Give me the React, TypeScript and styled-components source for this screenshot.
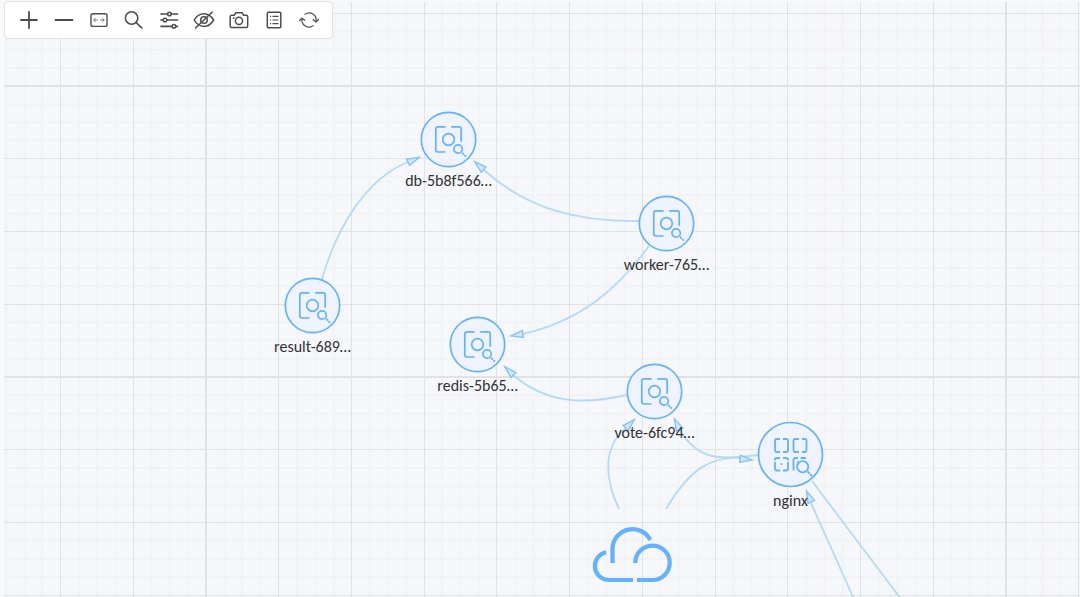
import React from 'react';
import styled, { createGlobalStyle } from 'styled-components';

const GlobalStyle = createGlobalStyle`
  *, *::before, *::after { box-sizing: border-box; }
  body {
    margin: 0;
    background: #f7f9fc;
    font-family: Carlito, Lato, "Liberation Sans", sans-serif;
    color: #333;
  }
`;

const Page = styled.main`
  position: relative;
  display: flex;
  height: 100vh;
  padding: 2px 0 0 4px;
  overflow: hidden;
`;

const Canvas = styled.section`
  position: relative;
  flex: 1;
  overflow: hidden;
  background: #f5f7fb;
`;

const Layer = styled.svg`
  position: absolute;
  inset: 0;
  width: 100%;
  height: 100%;
`;

const Toolbar = styled.div`
  position: absolute;
  top: 1px;
  left: 4px;
  display: flex;
  padding: 0 6px;
  background: #fff;
  border: 1px solid #e2e2e2;
  border-radius: 4px;
`;

const ToolButton = styled.button`
  display: flex;
  align-items: center;
  justify-content: center;
  width: 35px;
  height: 36px;
  padding: 0;
  border: 0;
  background: none;
  cursor: pointer;
`;

const ToolIcon = styled.svg`
  width: 24px;
  height: 24px;
  fill: none;
  stroke: #4d4d4d;
  stroke-width: 1.5;
  stroke-linecap: round;
  stroke-linejoin: round;
`;

const Node = styled.div<{ $x: number; $y: number }>`
  position: absolute;
  left: ${(p) => p.$x}px;
  top: ${(p) => p.$y}px;
  display: flex;
  flex-direction: column;
  align-items: center;
  gap: 3px;
  width: 121px;
  margin-left: -60px;
`;

const NodeIcon = styled.svg<{ $size: number }>`
  width: ${(p) => p.$size}px;
  height: ${(p) => p.$size}px;
  fill: none;
  stroke: #64b1fe;
  stroke-width: 1.7;
`;

const NodeLabel = styled.span`
  font-size: 16px;
  line-height: 20px;
  white-space: nowrap;
`;

/* Grid geometry, in canvas coordinates */
const CELL = 72.73;
const cells = Array.from({ length: 45 }, (_, i) => i);
const columnAt = (i: number) => 56.5 + CELL * i;
const rowAt = (i: number) => 11.2 + CELL * i;

const Grid = () => (
  <Layer aria-hidden="true" stroke="none">
    <g fill="#f2f3f4">
      {[-1, ...cells].flatMap((i) =>
        [1, 2, 3].map((j) => (
          <React.Fragment key={`${i}-${j}`}>
            <rect x={columnAt(i + j / 4) - 0.8} y="0" width="2" height="100%" />
            <rect x="0" y={rowAt(i + j / 4) - 0.8} width="100%" height="2" />
          </React.Fragment>
        )),
      )}
    </g>
    <g fill="#e1e2e3">
      {cells.map((i) => (
        <React.Fragment key={i}>
          <rect x={Math.floor(columnAt(i))} y="0" width={i % 11 === 2 ? 2 : 1} height="100%" />
          <rect x="0" y={Math.floor(rowAt(i))} width="100%" height={i % 4 === 1 ? 2 : 1} />
        </React.Fragment>
      ))}
    </g>
  </Layer>
);

type Edge = { d: string; tip?: [number, number, number] };

/* tip: x, y and heading in degrees */
const edges: Edge[] = [
  { d: 'M322 279C337 227 366 179 408 162', tip: [420, 157, -24] },
  { d: 'M640 221C580 222 528 210 484 170', tip: [474, 161, 222] },
  { d: 'M649 246C618 288 583 320 523 334', tip: [510, 336, 171] },
  { d: 'M627 395C586 404 548 405 513 375', tip: [504, 366, 224] },
  { d: 'M619 509C605 480 602 447 626 428', tip: [635, 419, -44] },
  { d: 'M758 455C722 460 698 461 680 430', tip: [674, 418, 244] },
  { d: 'M666 509C690 468 712 456 741 458', tip: [753, 460, 6] },
  { d: 'M812 481L901 599' },
  { d: 'M854 599L811 503', tip: [806, 490, 246] },
];

const Edges = () => (
  <Layer aria-hidden="true">
    <g transform="translate(-4 -2)" fill="none">
      {edges.map(({ d, tip }) => (
        <React.Fragment key={d}>
          <path d={d} stroke="#b5daf8" strokeWidth="1.8" />
          {tip && (
            <path
              d="M-1 0L-13 -3.5V3.5Z"
              transform={`translate(${tip[0]} ${tip[1]}) rotate(${tip[2]})`}
              fill="#d4e7f7"
              stroke="#86c3f5"
              strokeWidth="1.4"
            />
          )}
        </React.Fragment>
      ))}
      <g stroke="#64b1fe" strokeWidth="4.2">
        <path d="M606 552.3A14 14 0 0 0 609 580H633" />
        <path d="M612.5 563V548.5A20 20 0 0 1 650.3 540" />
        <path d="M635.3 563A17.2 17.2 0 1 1 652.5 580H637" />
      </g>
    </g>
  </Layer>
);

const PodIcon = () => (
  <NodeIcon $size={57} viewBox="-28.5 -28.5 57 57" aria-hidden="true">
    <circle r="27.2" fill="#eef3ff" />
    <path d="M-3 -12.7H-10.5Q-12.7 -12.7 -12.7 -10.5V10.3Q-12.7 12.5 -10.5 12.5H-3" />
    <path d="M2.7 -12.7H10.5Q12.7 -12.7 12.7 -10.5V2.3" />
    <circle r="5.8" />
    <circle cx="9.6" cy="9.5" r="4.2" />
    <path d="M13.6 13.4L15.3 15.1M15.9 15.7L17.4 17.2" />
  </NodeIcon>
);

const ServiceIcon = () => (
  <NodeIcon $size={67} viewBox="-33.5 -33.5 67 67" aria-hidden="true">
    <circle r="32" fill="#eef3ff" />
    <g strokeWidth="1.8">
      <path d="M-10.5 -15.5H-13.5Q-15.5 -15.5 -15.5 -13.5V-4.5Q-15.5 -2.5 -13.5 -2.5H-10.5" />
      <path d="M-7.5 -15.5H-4.5Q-2.5 -15.5 -2.5 -13.5V-4.5Q-2.5 -2.5 -4.5 -2.5H-7.5" />
      <path d="M8.5 -15.5H5Q3 -15.5 3 -13.5V-4.5Q3 -2.5 5 -2.5H8.5" />
      <path d="M11.5 -15.5H14Q16 -15.5 16 -13.5V-4.5Q16 -2.5 14 -2.5H11.5" />
      <path d="M-10.5 3.5H-13.5Q-15.5 3.5 -15.5 5.5V6M-15.5 7.5V14Q-15.5 16 -13.5 16H-10.5" />
      <path d="M-7.5 3.5H-4.5Q-2.5 3.5 -2.5 5.5V6M-2.5 7.5V14Q-2.5 16 -4.5 16H-7.5" />
      <path d="M-9.8 9.5H-8.2M3 16V5.5Q3 3.5 5 3.5H7.5M10 3.5H15.5" />
      <path d="M6.5 8.5V7.5H8.5" strokeWidth="1" />
      <circle cx="12.2" cy="12.2" r="5.6" />
      <path d="M17 17L19 19M19.6 19.6L21.6 21.6" />
    </g>
  </NodeIcon>
);

const tools: { name: string; icon: React.ReactNode }[] = [
  { name: 'Zoom in', icon: <path d="M12 4V20M4 12H20" strokeWidth="1.8" /> },
  { name: 'Zoom out', icon: <path d="M3.5 12H20.5" strokeWidth="1.8" /> },
  {
    name: 'Fit to view',
    icon: (
      <>
        <rect x="4" y="5.8" width="16" height="12.6" rx="2" strokeWidth="1.4" />
        <path
          d="M10.5 12H7M13.5 12H17M8.3 10.6L6.8 12L8.3 13.4M15.7 10.6L17.2 12L15.7 13.4"
          strokeWidth="1"
          stroke="#777"
        />
      </>
    ),
  },
  {
    name: 'Search',
    icon: (
      <>
        <circle cx="9.6" cy="10" r="6.2" />
        <path d="M14.2 14.6L19.8 19.9" />
      </>
    ),
  },
  {
    name: 'Filter',
    icon: (
      <>
        <path
          d="M4 6H10.5M14.3 6H20.5M4 12H6M10 12H20.5M4 18.3H15M18.8 18.3H20.5"
          strokeWidth="1.7"
        />
        <circle cx="12.4" cy="6" r="1.8" />
        <circle cx="8" cy="12" r="1.8" />
        <circle cx="16.9" cy="18.3" r="1.8" />
      </>
    ),
  },
  {
    name: 'Hide',
    icon: (
      <>
        <path d="M2.2 12C7 3.5 16.7 3.5 21.7 12C16.7 20.5 7 20.5 2.2 12Z" />
        <circle cx="12" cy="12" r="3.3" />
        <path d="M3.6 20L20.2 4" />
      </>
    ),
  },
  {
    name: 'Take screenshot',
    icon: (
      <>
        <path d="M4.7 7.3H7.2L8.7 4.8H15.2L16.7 7.3H19.2Q20.7 7.3 20.7 8.8V18Q20.7 19.5 19.2 19.5H4.7Q3.2 19.5 3.2 18V8.8Q3.2 7.3 4.7 7.3Z" />
        <circle cx="12" cy="12.8" r="3.6" />
        <path d="M6.3 10H7" />
      </>
    ),
  },
  {
    name: 'Legend',
    icon: (
      <>
        <rect x="5.3" y="4.3" width="13.5" height="15.4" rx="1" />
        <path
          d="M8.5 8.3H8.7M8.5 12H8.7M8.5 15.7H8.7M11 8.3H16M11 12H16M11 15.7H16"
          strokeWidth="1.2"
        />
      </>
    ),
  },
  {
    name: 'Refresh',
    icon: (
      <>
        <path
          d="M8 6.3A7 7 0 0 1 19 13.3M16.2 17.6A7 7 0 0 1 5 11"
          strokeWidth="1.2"
        />
        <path
          d="M16.2 11.8L19 14L21.3 11.5M2.7 12.6L5 10.3L7.7 12.2"
          strokeWidth="1.4"
        />
      </>
    ),
  },
];

const nodes = [
  { label: 'db-5b8f566…', x: 444, y: 109 },
  { label: 'worker-765…', x: 662, y: 193 },
  { label: 'result-689…', x: 308, y: 275 },
  { label: 'redis-5b65…', x: 473, y: 314 },
  { label: 'vote-6fc94…', x: 650, y: 361 },
  { label: 'nginx', x: 786, y: 419, service: true },
];

export default function App() {
  return (
    <>
      <GlobalStyle />
      <Page>
        <Canvas aria-label="Service map">
          <Grid />
          <Edges />
          {nodes.map((node) => (
            <Node key={node.label} $x={node.x} $y={node.y}>
              {node.service ? <ServiceIcon /> : <PodIcon />}
              <NodeLabel>{node.label}</NodeLabel>
            </Node>
          ))}
        </Canvas>
        <Toolbar role="toolbar" aria-label="Map controls">
          {tools.map(({ name, icon }) => (
            <ToolButton key={name} type="button" aria-label={name}>
              <ToolIcon viewBox="0 0 24 24" aria-hidden="true">
                {icon}
              </ToolIcon>
            </ToolButton>
          ))}
        </Toolbar>
      </Page>
    </>
  );
}
